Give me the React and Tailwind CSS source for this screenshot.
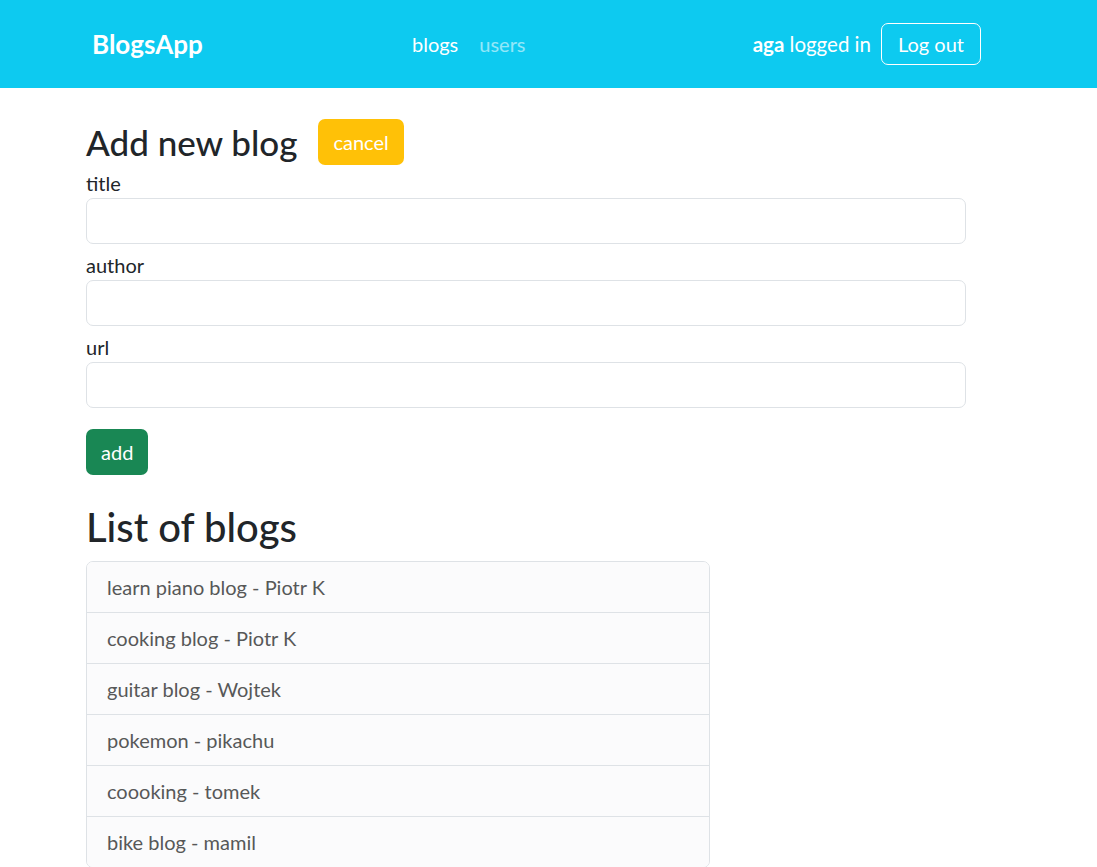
export default function App() {
  const blogs = [
    "learn piano blog - Piotr K",
    "cooking blog - Piotr K",
    "guitar blog - Wojtek",
    "pokemon - pikachu",
    "coooking - tomek",
    "bike blog - mamil",
  ];

  return (
    <div className="min-h-screen bg-white text-[#212529] text-[20px] leading-[30px]" style={{ fontFamily: 'Lato, "Noto Sans", sans-serif' }}>
      {/* navbar */}
      <nav className="h-[88px] bg-[#0dcaf0] flex items-center">
        <div className="ml-[92px] w-[889px] flex items-center">
          <span className="w-[320px] text-[26px] font-bold text-white">BlogsApp</span>
          <span className="text-white">blogs</span>
          <span className="ml-[21px] text-white/55">users</span>
          <div className="ml-auto flex items-center text-white">
            <span className="text-[20.5px]">
              <b className="font-bold">aga</b> logged in
            </span>
            <button className="ml-[10px] h-[42px] px-[16px] border border-white rounded-[7px] text-white">
              Log out
            </button>
          </div>
        </div>
      </nav>

      <main className="ml-[86px] w-[880px] pt-[31px]">
        <div className="flex items-center">
          <h3 className="text-[35px] leading-[42px] font-medium">Add new blog</h3>
          <button className="ml-[21px] h-[46px] px-[15px] bg-[#ffc107] text-white rounded-[7px]">cancel</button>
        </div>

        <form className="mt-[3px]">
          <label className="block">title</label>
          <input className="block w-full h-[46px] border border-[#dee2e6] rounded-[7px] px-[15px]" />
          <label className="block mt-[6px]">author</label>
          <input className="block w-full h-[46px] border border-[#dee2e6] rounded-[7px] px-[15px]" />
          <label className="block mt-[6px]">url</label>
          <input className="block w-full h-[46px] border border-[#dee2e6] rounded-[7px] px-[15px]" />
          <button type="button" className="mt-[21px] h-[46px] px-[15px] bg-[#198754] text-white rounded-[7px]">add</button>
        </form>

        <h2 className="mt-[28px] mb-[10px] text-[40px] leading-[48px] font-medium">List of blogs</h2>
        <ul className="w-[624px] border border-[#dee2e6] rounded-[7px] overflow-hidden">
          {blogs.map((b, i) => (
            <li
              key={b}
              className={`px-[20px] flex items-center bg-[#fbfbfc] text-[#575858] ${i > 0 ? "h-[51px] border-t border-[#dee2e6]" : "h-[50px]"}`}
            >
              {b}
            </li>
          ))}
        </ul>
      </main>
    </div>
  );
}
